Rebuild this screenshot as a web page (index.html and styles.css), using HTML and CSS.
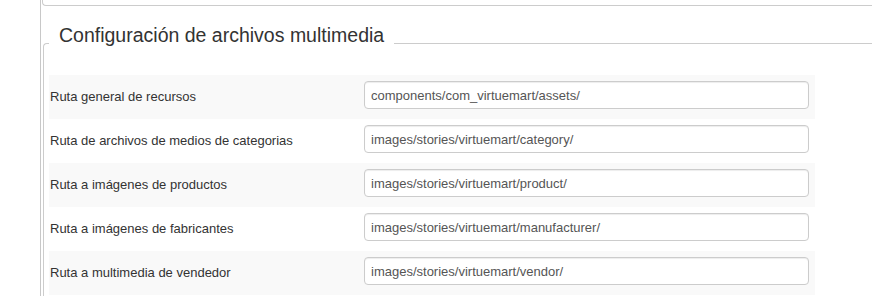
FILE: index.html
```html
<!doctype html>
<html lang="es">
<head>
	<meta charset="UTF-8" />
	<title>Configuración de archivos multimedia</title>
	<link rel="stylesheet" href="styles.css">
</head>
<body>

<div class="panel">
	<div class="prev"></div>

	<fieldset class="media">
		<legend>Configuración de archivos multimedia</legend>
		<div class="rows">
			<div class="row odd">
				<label for="media_path">Ruta general de recursos</label>
				<input type="text" id="media_path" value="components/com_virtuemart/assets/" />
			</div>
			<div class="row">
				<label for="media_category">Ruta de archivos de medios de categorias</label>
				<input type="text" id="media_category" value="images/stories/virtuemart/category/" />
			</div>
			<div class="row odd">
				<label for="media_product">Ruta a imágenes de productos</label>
				<input type="text" id="media_product" value="images/stories/virtuemart/product/" />
			</div>
			<div class="row">
				<label for="media_manufacturer">Ruta a imágenes de fabricantes</label>
				<input type="text" id="media_manufacturer" value="images/stories/virtuemart/manufacturer/" />
			</div>
			<div class="row odd">
				<label for="media_vendor">Ruta a multimedia de vendedor</label>
				<input type="text" id="media_vendor" value="images/stories/virtuemart/vendor/" />
			</div>
		</div>
	</fieldset>
</div>

</body>
</html>
```

FILE: styles.css
```css
html, body{
	margin: 0;
	padding: 0;
	overflow: hidden;
	background: #fff;
}
body{
	font-size: 13px;
	font-family: "Liberation Sans", Arial, sans-serif;
	color: #333;
}
.panel{
	margin-left: 40px;
	padding-left: 1px;
	height: 296px;
	border-left: 1px solid #c8c8c8;
}
/* bottom of the previous block, scrolled out of view */
.prev{
	height: 5px;
	margin-bottom: 17px;
	border: 1px solid #ccc;
	border-top: 0;
	border-right: 0;
	border-radius: 0 0 0 4px;
}
.media{
	margin: 0 0 0 1px;
	padding: 11px 5px 20px 5px;
	border: 1px solid #ccc;
	border-right: 0;
	border-radius: 4px 0 0 4px;
	min-width: 0;
}
.media legend{
	font-size: 19.5px;
	line-height: 24px;
	padding: 0 10px 17px 10px;
	color: #333;
}
.rows{
	width: 766px;
}
.row{
	display: grid;
	grid-template-columns: 315px 445px;
	box-sizing: border-box;
	height: 44px;
	padding: 6px 6px 10px 0;
}
.row.odd{
	background: #f9f9f9;
}
.row label{
	line-height: 32px;
	padding-left: 1px;
}
.row input{
	box-sizing: border-box;
	width: 445px;
	height: 28px;
	margin: 0;
	padding: 0 6px;
	font-size: 13px;
	font-family: "Liberation Sans", Arial, sans-serif;
	color: #555;
	background: #fff;
	border: 1px solid #ccc;
	border-radius: 4px;
	box-shadow: inset 0 1px 1px rgba(0, 0, 0, 0.075);
	outline: none;
}
```
